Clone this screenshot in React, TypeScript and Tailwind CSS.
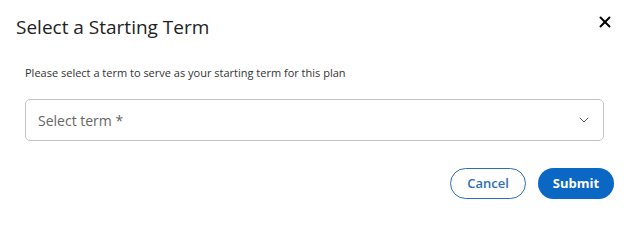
import { X, ChevronDown } from "lucide-react";

export default function App() {
  return (
    <div className="w-[624px] h-[210px] bg-white font-['Open_Sans',sans-serif] text-[#333] relative">
      <button className="absolute right-[10px] top-[13px] text-black">
        <X className="w-[18px] h-[18px]" strokeWidth={2.5} />
      </button>
      <h2 className="pl-4 pt-[14px] text-[19px] leading-[26px] text-[#222]">
        Select a Starting Term
      </h2>
      <div className="px-[25px]">
        <p className="mt-[25px] text-[11px] leading-4 text-[#333]">
          Please select a term to serve as your starting term for this plan
        </p>
        <div className="mt-[18px] h-[42px] w-[579px] rounded-[5px] border border-[#c4c4c4] flex items-center justify-between pl-3 pr-[11px]">
          <span className="text-[14px] text-[#666]">Select term *</span>
          <ChevronDown className="w-[16px] h-[16px] text-[#555]" strokeWidth={1.5} />
        </div>
      </div>
      <div className="flex justify-end gap-3 pr-[10px] mt-[27px]">
        <button className="h-[31px] w-[76px] rounded-full border border-[#2e6fb5] text-[#2e6fb5] text-[13px] font-semibold">
          Cancel
        </button>
        <button className="h-[31px] w-[76px] rounded-full bg-[#0a67c4] text-white text-[13px] font-bold">
          Submit
        </button>
      </div>
    </div>
  );
}
